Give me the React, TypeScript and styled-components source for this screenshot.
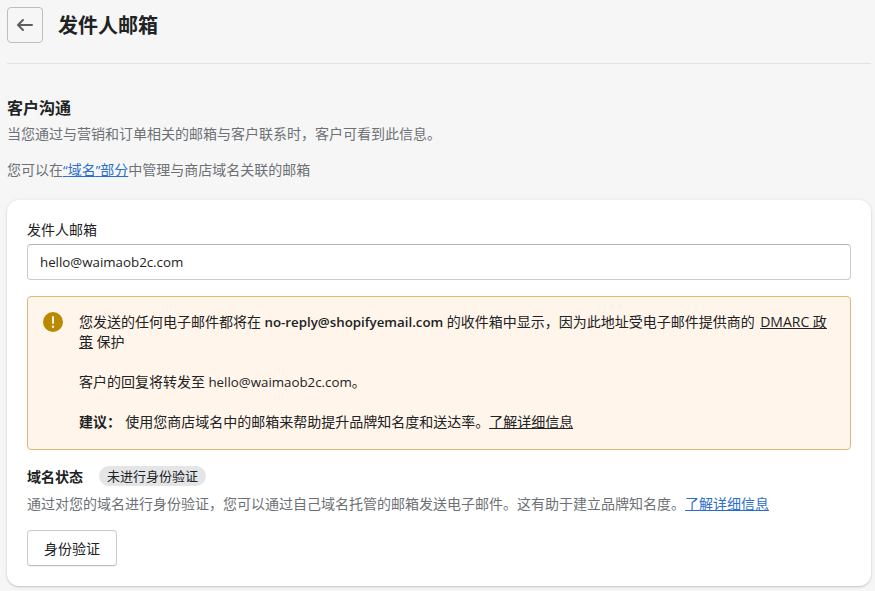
import React from "react";
import styled, { createGlobalStyle } from "styled-components";

const GlobalStyle = createGlobalStyle`
  html, body { margin: 0; padding: 0; background: #f6f6f7; }
  body {
    font-family: "Noto Sans CJK SC", "Open Sans", sans-serif;
    font-size: 14px;
    line-height: 20px;
    color: #202223;
  }
  * { box-sizing: border-box; }
`;

const Page = styled.div`
  width: 875px;
  height: 591px;
  padding: 7px 4px 0 7px;
  overflow: hidden;
`;

const Header = styled.header`
  display: flex;
  align-items: center;
  gap: 15px;
  box-sizing: content-box;
  height: 36px;
  padding-bottom: 20px;
  border-bottom: 1px solid #e1e3e5;
  margin-bottom: 31px;
`;

const BackButton = styled.button`
  width: 36px;
  height: 36px;
  padding: 0;
  display: flex;
  align-items: center;
  justify-content: center;
  background: #f6f6f7;
  border: 1px solid #babfc3;
  border-radius: 4px;
  color: #5c5f62;
`;

const Title = styled.h1`
  margin: 0;
  font-size: 20px;
  line-height: 28px;
  font-weight: 700;
  color: #202223;
`;

const SectionTitle = styled.h2`
  margin: 0 0 4px;
  font-size: 16px;
  line-height: 24px;
  font-weight: 600;
  color: #202223;
`;

const Muted = styled.p<{ $gap?: number }>`
  margin: 0 0 ${(p) => p.$gap ?? 0}px;
  color: #6d7175;
  font-size: 14px;
  line-height: 20px;
`;

const BlueLink = styled.a`
  color: #2c6ecb;
  text-decoration: underline;
`;

const Card = styled.section`
  margin-top: 21px;
  background: #fff;
  border-radius: 12px;
  padding: 19px 20px 20px;
  height: 386px;
  box-shadow: 0 1px 2px rgba(0, 0, 0, 0.18), 0 0 5px rgba(23, 24, 24, 0.05);
`;

const FieldLabel = styled.label`
  display: block;
  margin-bottom: 5px;
  color: #202223;
`;

const Input = styled.input`
  display: block;
  width: 100%;
  height: 36px;
  padding: 0 12px;
  font-family: "Open Sans", sans-serif;
  font-size: 13.3px;
  color: #202223;
  background: #fff;
  border: 1px solid #c9cccf;
  border-top-color: #aeb4b9;
  border-radius: 4px;
  outline: none;
`;

const Banner = styled.div`
  display: flex;
  gap: 16px;
  margin-top: 16px;
  height: 154px;
  padding: 14px 15px;
  background: #fff5ea;
  border: 1px solid #e1b878;
  border-radius: 4px;
`;

const BannerIcon = styled.svg`
  flex: none;
  width: 20px;
  height: 20px;
  margin-top: 1px;
  color: #b98900;
`;

const BannerBody = styled.div`
  flex: 1;
  min-width: 0;
  color: #202223;
`;

const BannerLine = styled.p`
  margin: 0 0 20px;
  &:last-child { margin-bottom: 0; }
`;

const Latin = styled.span`
  font-family: "Open Sans", sans-serif;
  font-size: 13.3px;
  line-height: 1;
`;

const StrongLatin = styled(Latin)`
  font-weight: 600;
`;

const Caps = styled(Latin)`
  font-size: 14px;
`;

const Strong = styled.strong`
  font-weight: 700;
  margin-right: 1px;
`;

const DarkLink = styled.a`
  color: #202223;
  text-decoration: underline;
`;

const PolicyLink = styled(DarkLink)`
  margin-left: 2px;
`;

const StatusRow = styled.div`
  display: flex;
  align-items: center;
  gap: 16px;
  margin-top: 16px;
  height: 20px;
`;

const StatusLabel = styled.span`
  font-weight: 700;
`;

const Badge = styled.span`
  display: inline-block;
  height: 20px;
  padding: 0 8px;
  border-radius: 10px;
  background: #e4e5e7;
  color: #202223;
  font-size: 13px;
  line-height: 20px;
`;

const StatusText = styled(Muted)`
  margin-top: 7px;
`;

const PlainButton = styled.button`
  display: block;
  margin-top: 17px;
  width: 90px;
  height: 36px;
  padding: 0;
  font: inherit;
  color: #202223;
  background: #fff;
  border: 1px solid #c9cccf;
  border-bottom-color: #babfc3;
  border-radius: 4px;
  box-shadow: 0 1px 0 rgba(0, 0, 0, 0.05);
`;

export default function App() {
  return (
    <>
      <GlobalStyle />
      <Page>
        <Header>
          <BackButton aria-label="返回">
            <svg width="20" height="20" viewBox="0 0 20 20" fill="currentColor">
              <path d="M17 9H5.414l3.293-3.293a1 1 0 1 0-1.414-1.414l-5 5a1 1 0 0 0 0 1.414l5 5a1 1 0 0 0 1.414-1.414L5.414 11H17a1 1 0 1 0 0-2z" />
            </svg>
          </BackButton>
          <Title>发件人邮箱</Title>
        </Header>
        <SectionTitle>客户沟通</SectionTitle>
        <Muted $gap={16}>当您通过与营销和订单相关的邮箱与客户联系时，客户可看到此信息。</Muted>
        <Muted>
          您可以在<BlueLink href="#"><Latin>“</Latin>域名<Latin>”</Latin>部分</BlueLink>中管理与商店域名关联的邮箱
        </Muted>
        <Card>
          <FieldLabel htmlFor="sender">发件人邮箱</FieldLabel>
          <Input id="sender" defaultValue="hello@waimaob2c.com" />
          <Banner>
            <BannerIcon viewBox="0 0 20 20" fill="currentColor">
              <path d="M10 0a10 10 0 1 0 0 20 10 10 0 0 0 0-20zM9 5a1 1 0 0 1 2 0v6a1 1 0 1 1-2 0V5zm1 11a1.25 1.25 0 1 0 0-2.5 1.25 1.25 0 0 0 0 2.5z" fillRule="evenodd" />
            </BannerIcon>
            <BannerBody>
              <BannerLine>
                您发送的任何电子邮件都将在<Latin> </Latin><StrongLatin>no-reply@shopifyemail.com</StrongLatin><Latin> </Latin>的收件箱中显示，因为此地址受电子邮件提供商的<Latin> </Latin><PolicyLink href="#"><Caps>DMARC </Caps>政策</PolicyLink><Latin> </Latin>保护
              </BannerLine>
              <BannerLine>客户的回复将转发至<Latin> hello@waimaob2c.com</Latin>。</BannerLine>
              <BannerLine>
                <Strong>建议：</Strong> 使用您商店域名中的邮箱来帮助提升品牌知名度和送达率。<DarkLink href="#">了解详细信息</DarkLink>
              </BannerLine>
            </BannerBody>
          </Banner>
          <StatusRow>
            <StatusLabel>域名状态</StatusLabel>
            <Badge>未进行身份验证</Badge>
          </StatusRow>
          <StatusText>
            通过对您的域名进行身份验证，您可以通过自己域名托管的邮箱发送电子邮件。这有助于建立品牌知名度。<BlueLink href="#">了解详细信息</BlueLink>
          </StatusText>
          <PlainButton>身份验证</PlainButton>
        </Card>
      </Page>
    </>
  );
}
